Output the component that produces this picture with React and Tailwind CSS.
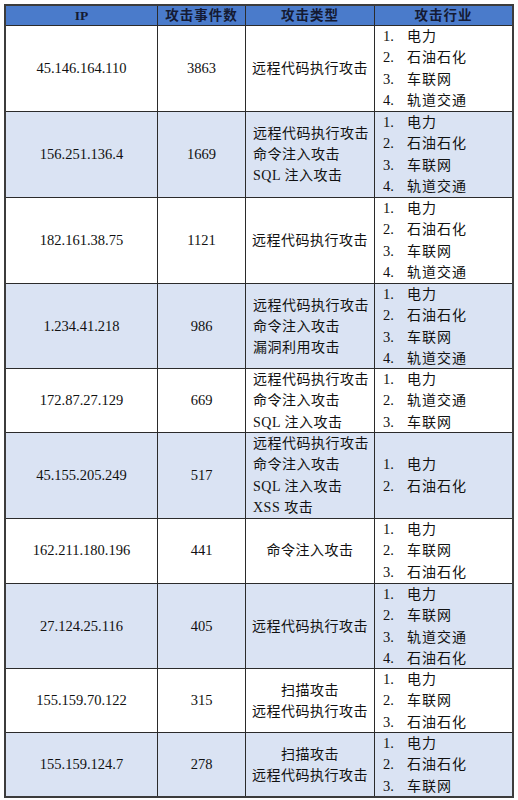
import React from "react";

const rows = [
  { ip: "45.146.164.110", n: "3863", types: ["远程代码执行攻击"], center: true, ind: ["电力", "石油石化", "车联网", "轨道交通"], h: 86 },
  { ip: "156.251.136.4", n: "1669", types: ["远程代码执行攻击", "命令注入攻击", "SQL 注入攻击"], center: false, ind: ["电力", "石油石化", "车联网", "轨道交通"], h: 86 },
  { ip: "182.161.38.75", n: "1121", types: ["远程代码执行攻击"], center: true, ind: ["电力", "石油石化", "车联网", "轨道交通"], h: 86 },
  { ip: "1.234.41.218", n: "986", types: ["远程代码执行攻击", "命令注入攻击", "漏洞利用攻击"], center: false, ind: ["电力", "石油石化", "车联网", "轨道交通"], h: 85 },
  { ip: "172.87.27.129", n: "669", types: ["远程代码执行攻击", "命令注入攻击", "SQL 注入攻击"], center: false, ind: ["电力", "轨道交通", "车联网"], h: 64 },
  { ip: "45.155.205.249", n: "517", types: ["远程代码执行攻击", "命令注入攻击", "SQL 注入攻击", "XSS 攻击"], center: false, ind: ["电力", "石油石化"], h: 86 },
  { ip: "162.211.180.196", n: "441", types: ["命令注入攻击"], center: true, ind: ["电力", "车联网", "石油石化"], h: 65 },
  { ip: "27.124.25.116", n: "405", types: ["远程代码执行攻击"], center: true, ind: ["电力", "车联网", "轨道交通", "石油石化"], h: 85 },
  { ip: "155.159.70.122", n: "315", types: ["扫描攻击", "远程代码执行攻击"], center: true, ind: ["电力", "车联网", "石油石化"], h: 64 },
  { ip: "155.159.124.7", n: "278", types: ["扫描攻击", "远程代码执行攻击"], center: true, ind: ["电力", "石油石化", "车联网"], h: 63 },
];

const font = { fontFamily: '"Liberation Serif", "Noto Sans CJK SC", serif' };

export default function App() {
  return (
    <div className="w-[518px] h-[800px] bg-white pt-[4px] pl-[4px]" style={font}>
      <div className="w-[510px] border-2 border-[#3c3c3c] text-[#111] text-[14px]">
        <div className="grid grid-cols-[152px_88px_129px_137px] h-[20px] bg-[#4a7bcb] text-[#141a33] font-bold text-[13.5px] leading-[19px] border-b border-[#2b2b2b]">
          <div className="border-r border-[#2b2b2b] flex items-center justify-center">IP</div>
          <div className="border-r border-[#2b2b2b] flex items-center justify-center tracking-[1px]">攻击事件数</div>
          <div className="border-r border-[#2b2b2b] flex items-center justify-center tracking-[1px]">攻击类型</div>
          <div className="flex items-center justify-center tracking-[1px]">攻击行业</div>
        </div>
        {rows.map((r, i) => (
          <div
            key={i}
            className={
              "grid grid-cols-[152px_88px_129px_137px] overflow-hidden " +
              (i % 2 === 1 ? "bg-[#dae3f3] " : "bg-white ") +
              (i < rows.length - 1 ? "border-b border-[#2b2b2b]" : "")
            }
            style={{ height: r.h }}
          >
            <div className="border-r border-[#2b2b2b] flex items-center justify-center text-[14.5px]">{r.ip}</div>
            <div className="border-r border-[#2b2b2b] flex items-center justify-center text-[14.5px]">{r.n}</div>
            <div className={"border-r border-[#2b2b2b] flex flex-col justify-center tracking-[0.5px] " + (r.center ? "items-center" : "items-start pl-[7px]")}>
              {r.types.map((t, j) => (
                <div key={j} className="whitespace-nowrap leading-[21.3px]">{t}</div>
              ))}
            </div>
            <div className="flex flex-col justify-center pl-[8px]">
              {r.ind.map((t, j) => (
                <div key={j} className="flex leading-[21.3px] whitespace-nowrap">
                  <span className="w-[24px] text-[14.5px]">{j + 1}.</span>
                  <span className="tracking-[1px]">{t}</span>
                </div>
              ))}
            </div>
          </div>
        ))}
      </div>
    </div>
  );
}
